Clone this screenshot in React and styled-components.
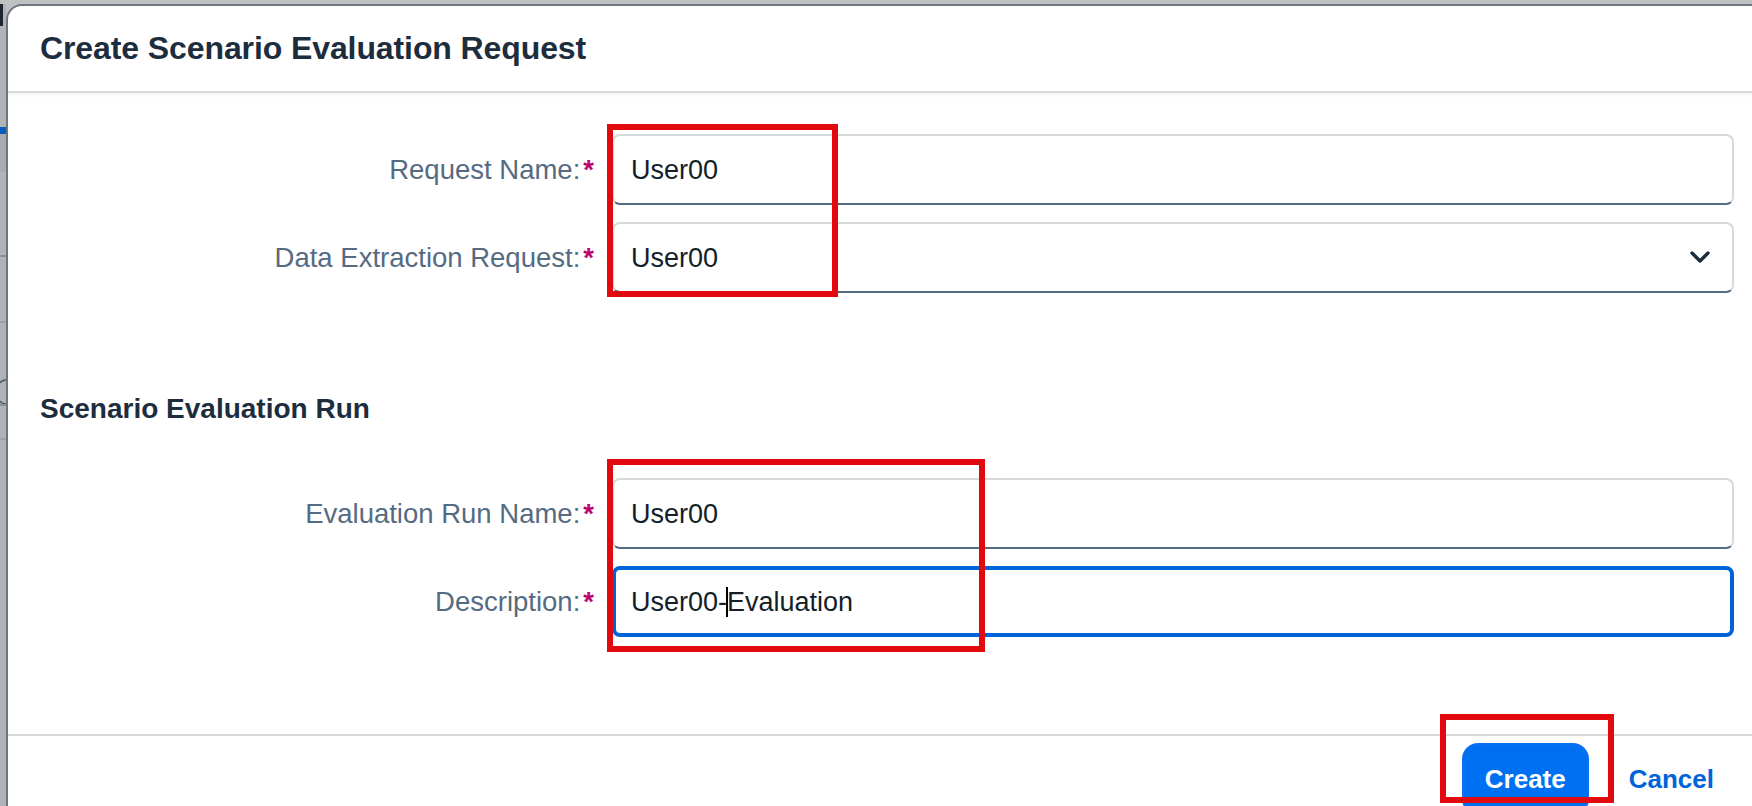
import React from "react";
import styled, { createGlobalStyle, css } from "styled-components";

const GlobalStyle = createGlobalStyle`
  html, body {
    margin: 0;
    padding: 0;
    width: 1752px;
    height: 806px;
    overflow: hidden;
    background: #bfc0c1;
    font-family: "Liberation Sans", Arial, sans-serif;
  }
  * { box-sizing: border-box; }
`;

const Page = styled.div`
  position: relative;
  width: 1752px;
  height: 806px;
  overflow: hidden;
  display: grid;
  grid-template-columns: 6px 1fr;
  grid-template-rows: 4px 1fr;
  background: #bfc0c1;
`;

const TopStrip = styled.div`
  grid-column: 1 / 3;
  height: 4px;
  overflow: hidden;
  background: #c0c1c2;
`;

const LeftStrip = styled.div`
  background: #b1b3b6;
  overflow: hidden;
`;

const Dialog = styled.section`
  background: #ffffff;
  border-top: 2px solid #6e7684;
  border-left: 2px solid #6e7684;
  border-top-left-radius: 16px;
  display: flex;
  flex-direction: column;
  overflow: hidden;

  & > * {
    flex-shrink: 0;
  }
`;

const Header = styled.header`
  height: 87px;
  display: flex;
  align-items: center;
  padding-left: 32px;
  border-bottom: 2px solid #d9d9d9;
  box-shadow: 0 2px 4px rgba(0, 0, 0, 0.05);
`;

const Title = styled.h1`
  margin: 0;
  font-size: 32px;
  font-weight: 700;
  color: #1d2d3e;
  letter-spacing: -0.1px;
`;

const Form = styled.div`
  display: flex;
  flex-direction: column;
  padding-right: 18px;
  padding-top: ${(p) => p.$top || 0}px;
`;

const Group = styled.div`
  display: flex;
  flex-direction: column;
  gap: 17px;
`;

const Row = styled.div`
  display: grid;
  grid-template-columns: 586px 1fr;
  column-gap: 18px;
  align-items: center;
`;

const Label = styled.label`
  justify-self: end;
  font-size: 27.5px;
  line-height: 34px;
  color: #556b82;
  white-space: nowrap;
`;

const Required = styled.span`
  color: #ba066c;
  font-weight: 700;
  margin-left: 3px;
`;

const Field = styled.div`
  height: 71px;
  display: flex;
  align-items: center;
  justify-content: space-between;
  padding: 0 22px 0 17px;
  border: 2px solid #d5dadd;
  border-bottom-color: #556b82;
  border-radius: 8px;
  font-size: 27px;
  color: #131e29;
  background: #ffffff;
  ${(p) =>
    p.$focused &&
    css`
      border: 4px solid #0064d9;
      padding-left: 15px;
    `}
`;

const Value = styled.span`
  white-space: nowrap;
  line-height: 34px;
  display: inline-flex;
  align-items: center;
`;

const Caret = styled.span`
  display: inline-block;
  width: 2px;
  height: 30px;
  margin: 0 -1px;
  background: #000000;
`;

const SectionTitle = styled.h2`
  margin: 96px 0 49px 32px;
  font-size: 28px;
  line-height: 40px;
  font-weight: 700;
  color: #1d2d3e;
`;

const Footer = styled.footer`
  margin-top: 97px;
  border-top: 2px solid #d9d9d9;
  padding: 7px 16px 0 0;
  display: flex;
  justify-content: flex-end;
  gap: 18px;
`;

const Button = styled.button`
  height: 72px;
  font-family: "Liberation Sans", Arial, sans-serif;
  font-size: 26px;
  font-weight: 700;
  border-radius: 16px;
  cursor: pointer;
  ${(p) =>
    p.$primary
      ? css`
          padding: 0 21px;
          background: #0070f2;
          color: #ffffff;
          border: 2px solid #0a72f0;
        `
      : css`
          padding: 0 20px;
          background: transparent;
          color: #0064d9;
          border: 2px solid transparent;
        `}
`;

const Highlight = styled.div`
  position: absolute;
  left: ${(p) => p.$x}px;
  top: ${(p) => p.$y}px;
  width: ${(p) => p.$w}px;
  height: ${(p) => p.$h}px;
  border: 6px solid #e30a0f;
  pointer-events: none;
`;

const ChevronDown = () => (
  <svg width="20" height="13" viewBox="0 0 20 13" aria-hidden="true">
    <polyline
      points="2,2 10,10 18,2"
      fill="none"
      stroke="#1d2d3e"
      strokeWidth="3.4"
      strokeLinecap="round"
      strokeLinejoin="round"
    />
  </svg>
);

const TopFragments = () => (
  <svg width="1752" height="4" viewBox="0 0 1752 4" aria-hidden="true">
    <rect x="0" y="0" width="1752" height="4" fill="#c0c1c2" />
    <rect x="114" y="0" width="2" height="4" fill="#8d9299" />
    <rect x="179" y="0" width="2" height="4" fill="#8d9299" />
    <rect x="233" y="0" width="3" height="4" fill="#c9302f" />
    <rect x="317" y="0" width="3" height="4" fill="#c9302f" />
    <rect x="255" y="0" width="43" height="4" fill="#c62a2c" />
    <rect x="410" y="0" width="3" height="4" fill="#d0681f" />
    <rect x="492" y="0" width="3" height="4" fill="#d0681f" />
    <path d="M434 4 L438 0 M444 4 L448 0 M454 4 L458 0 M464 4 L468 0" stroke="#c95e1a" strokeWidth="3" />
    <rect x="585" y="0" width="3" height="4" fill="#2e8b45" />
    <rect x="669" y="0" width="3" height="4" fill="#2e8b45" />
    <rect x="610" y="0" width="2" height="4" fill="#2e8b45" />
    <rect x="626" y="0" width="3" height="2" fill="#2e8b45" />
    <rect x="643" y="0" width="2" height="4" fill="#2e8b45" />
  </svg>
);

const LeftFragments = () => (
  <svg width="6" height="802" viewBox="0 0 6 802" aria-hidden="true">
    <rect x="0" y="0" width="3" height="22" fill="#1c2530" />
    <rect x="0" y="123" width="6" height="7" fill="#0a5bbf" />
    <rect x="0" y="130" width="6" height="38" fill="#a9abae" />
    <rect x="0" y="251" width="6" height="2" fill="#8a9098" />
    <rect x="0" y="317" width="6" height="2" fill="#9ea3a9" />
    <path d="M6 376 A 10 12 0 0 0 6 400" fill="none" stroke="#4b5562" strokeWidth="1.5" />
    <rect x="0" y="400" width="6" height="2" fill="#8a9098" />
    <rect x="0" y="434" width="6" height="2" fill="#9ea3a9" />
  </svg>
);

export default function App() {
  return (
    <>
      <GlobalStyle />
      <Page>
        <TopStrip>
          <TopFragments />
        </TopStrip>
        <LeftStrip>
          <LeftFragments />
        </LeftStrip>
        <Dialog>
          <Header>
            <Title>Create Scenario Evaluation Request</Title>
          </Header>
          <Form $top={41}>
            <Group>
              <Row>
                <Label>
                  Request Name:<Required>*</Required>
                </Label>
                <Field>
                  <Value>User00</Value>
                </Field>
              </Row>
              <Row>
                <Label>
                  Data Extraction Request:<Required>*</Required>
                </Label>
                <Field>
                  <Value>User00</Value>
                  <ChevronDown />
                </Field>
              </Row>
            </Group>
          </Form>
          <SectionTitle>Scenario Evaluation Run</SectionTitle>
          <Form>
            <Group>
              <Row>
                <Label>
                  Evaluation Run Name:<Required>*</Required>
                </Label>
                <Field>
                  <Value>User00</Value>
                </Field>
              </Row>
              <Row>
                <Label>
                  Description:<Required>*</Required>
                </Label>
                <Field $focused>
                  <Value>
                    User00-<Caret />Evaluation
                  </Value>
                </Field>
              </Row>
            </Group>
          </Form>
          <Footer>
            <Button $primary>Create</Button>
            <Button>Cancel</Button>
          </Footer>
        </Dialog>
        <Highlight $x={607} $y={124} $w={231} $h={173} />
        <Highlight $x={607} $y={459} $w={378} $h={193} />
        <Highlight $x={1440} $y={714} $w={174} $h={89} />
      </Page>
    </>
  );
}
